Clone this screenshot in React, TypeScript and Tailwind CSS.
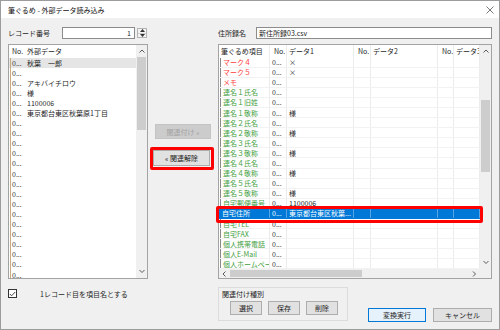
import clsx from "clsx";

const leftRows = [
  "秋葉　一郎",
  "",
  "アキバイチロウ",
  "様",
  "1100006",
  "東京都台東区秋葉原1丁目",
  ...Array(16).fill(""),
];

type Row = { name: string; red?: boolean; d1?: string; selected?: boolean };

const rightRows: Row[] = [
  { name: "マーク４", red: true, d1: "×" },
  { name: "マーク５", red: true, d1: "×" },
  { name: "メモ", red: true },
  { name: "連名１氏名" },
  { name: "連名１旧姓" },
  { name: "連名１敬称", d1: "様" },
  { name: "連名２氏名" },
  { name: "連名２敬称", d1: "様" },
  { name: "連名３氏名" },
  { name: "連名３敬称", d1: "様" },
  { name: "連名４氏名" },
  { name: "連名４敬称", d1: "様" },
  { name: "連名５氏名" },
  { name: "連名５敬称", d1: "様" },
  { name: "自宅郵便番号", d1: "1100006" },
  { name: "自宅住所", d1: "東京都台東区秋葉...", selected: true },
  { name: "自宅TEL" },
  { name: "自宅FAX" },
  { name: "個人携帯電話" },
  { name: "個人E-Mail" },
  { name: "個人ホームページ" },
];

function Chevron({ dir }: { dir: "up" | "down" | "left" | "right" }) {
  const vertical = dir === "up" || dir === "down";
  const pts = {
    up: "0.5,3.5 3,1 5.5,3.5",
    down: "0.5,1 3,3.5 5.5,1",
    left: "3.5,0.5 1,3 3.5,5.5",
    right: "1,0.5 3.5,3 1,5.5",
  }[dir];
  return (
    <svg width={vertical ? 6 : 5} height={vertical ? 5 : 6} viewBox={vertical ? "0 0 6 5" : "0 0 5 6"}>
      <polyline points={pts} fill="none" stroke="#5a5a5a" strokeWidth="1" />
    </svg>
  );
}

function VScroll({ thumb }: { thumb: string }) {
  return (
    <div className="flex h-full w-[11px] shrink-0 flex-col bg-[#f0f0f0]">
      <div className="flex h-[12px] shrink-0 items-center justify-center">
        <Chevron dir="up" />
      </div>
      <div className="flex flex-1 flex-col px-[1px]">
        <div className={clsx("w-full bg-[#cdcdcd]", thumb)} />
      </div>
      <div className="flex h-[14px] shrink-0 items-center justify-center">
        <Chevron dir="down" />
      </div>
    </div>
  );
}

function WinButton({ children, className, disabled }: { children: React.ReactNode; className?: string; disabled?: boolean }) {
  return (
    <div
      className={clsx(
        "flex items-center justify-center border",
        disabled ? "border-[#c4c4c4] bg-[#cccccc] text-[#a3a3a3]" : "border-[#adadad] bg-[#e1e1e1] text-[#1e1e1e]",
        className
      )}
    >
      {children}
    </div>
  );
}

// widths of the right grid's columns, label column first
const cols = ["w-[51px]", "w-[17px]", "w-[67px]", "w-[17px]", "w-[67px]", "w-[16px]", "w-[26px]"];

export default function App() {
  return (
    <div className="flex h-[330px] w-[500px] flex-col overflow-hidden border border-[#9c9c9c] bg-[#f0f0f0] font-['Noto_Sans_CJK_JP','Noto_Sans',sans-serif] text-[7px] leading-[10px] text-[#1e1e1e]">
      {/* Title bar */}
      <div className="flex h-[17px] shrink-0 items-center bg-white pl-[7px] pr-[5px] text-[#111]">
        <span>筆ぐるめ - 外部データ読み込み</span>
        <svg className="ml-auto" width="8" height="8" viewBox="0 0 8 8">
          <path d="M0.5 0.5 L7.5 7.5 M7.5 0.5 L0.5 7.5" stroke="#555" strokeWidth="0.8" />
        </svg>
      </div>

      {/* Record number / address book name */}
      <div className="mt-[9px] flex h-[12px] shrink-0 items-center px-[7px]">
        <span className="w-[54px]">レコード番号</span>
        <div className="flex h-[12px] w-[73px] items-center justify-end border border-[#8c8c8c] bg-white pr-[3px]">1</div>
        <div className="ml-[2px] flex h-[10px] w-[10px] flex-col border border-[#b4b4b4] bg-[#f4f4f4]">
          <div className="flex flex-1 items-center justify-center border-b border-[#cfcfcf]">
            <svg width="5" height="3" viewBox="0 0 5 3"><polygon points="0,3 2.5,0 5,3" fill="#333" /></svg>
          </div>
          <div className="flex flex-1 items-center justify-center">
            <svg width="5" height="3" viewBox="0 0 5 3"><polygon points="0,0 2.5,3 5,0" fill="#333" /></svg>
          </div>
        </div>
        <span className="ml-[71px] w-[38px]">住所録名</span>
        <div className="flex h-[12px] flex-1 items-center border border-[#8c8c8c] bg-white pl-[2px]">新住所録03.csv</div>
      </div>

      {/* Main area */}
      <div className="mt-[5px] flex h-[235px] shrink-0 px-[7px]">
        {/* External data list */}
        <div className="flex h-full w-[140px] overflow-hidden border border-[#a3a3a3] bg-white">
          <div className="flex flex-1 flex-col overflow-hidden">
            <div className="flex h-[12.5px] shrink-0 items-center">
              <span className="w-[18px] pl-[3px]">No.</span>
              <span>外部データ</span>
            </div>
            {leftRows.map((r, i) => (
              <div key={i} className={clsx("flex h-[10.1px] shrink-0 items-center whitespace-nowrap", i === 0 && "bg-[#e5e5e5]")}>
                <span className="flex h-full w-[18px] items-center text-[#333]">
                  <span className="ml-[1px] mr-[1px] h-full w-px bg-[#c9ab84]" />
                  0...
                </span>
                <span>{r}</span>
              </div>
            ))}
          </div>
          <VScroll thumb="h-[73px]" />
        </div>

        {/* Link / unlink buttons */}
        <div className="flex w-[70px] flex-col">
          <WinButton disabled className="ml-[7px] mt-[80px] h-[15px] w-[56px]">
            関連付け »
          </WinButton>
          <div className="relative ml-[5px] mt-[11px] h-[16px] w-[57px]">
            <WinButton className="h-full w-full">« 関連解除</WinButton>
            <div className="absolute -bottom-[4px] -left-[3px] -right-[4px] -top-[3px] rounded-[2px] border-[3px] border-[#ff0000]" />
          </div>
        </div>

        {/* Fudegurume fields grid */}
        <div className="relative h-full w-[274px]">
          <div className="flex h-full w-full flex-col border border-[#a3a3a3] bg-white">
            <div className="flex min-h-0 flex-1 overflow-hidden">
              <div className="flex w-[261px] flex-col">
                <div className="flex h-[12.5px] shrink-0 whitespace-nowrap">
                  {["筆ぐるめ項目", "No.", "データ1", "No.", "データ2", "No.", "データ3"].map((h, i) => (
                    <div
                      key={i}
                      className={clsx(
                        "flex items-center overflow-hidden border-r border-[#ececec]",
                        cols[i],
                        h === "No." ? "pl-[4px]" : "pl-[2px]"
                      )}
                    >
                      {h}
                    </div>
                  ))}
                </div>
                {rightRows.map((r, i) => (
                  <div
                    key={i}
                    className={clsx(
                      "flex h-[10.1px] shrink-0 whitespace-nowrap border-b",
                      r.selected ? "border-[#0078d7] bg-[#0078d7] text-white" : "border-[#f2f2f2]"
                    )}
                  >
                    <div
                      className={clsx(
                        "flex items-center overflow-hidden border-r",
                        cols[0],
                        r.selected ? "border-[#5aa3e3]" : "border-[#ececec]",
                        !r.selected && (r.red ? "text-[#ff3c3c]" : "text-[#3f9e3f]")
                      )}
                    >
                      {!r.selected && <span className="ml-[1px] mr-[2px] h-full w-px shrink-0 bg-[#8a8a8a]" />}
                      {r.selected && <span className="w-[3px] shrink-0" />}
                      {r.name}
                    </div>
                    <div className={clsx("flex items-center overflow-hidden border-r pl-[2px]", cols[1], r.selected ? "border-[#5aa3e3]" : "border-[#ececec] text-[#333]")}>
                      0...
                    </div>
                    <div className={clsx("flex items-center overflow-hidden border-r pl-[2px]", cols[2], r.selected ? "border-[#5aa3e3]" : "border-[#ececec]")}>
                      {r.d1}
                    </div>
                    {cols.slice(3).map((c, j) => (
                      <div key={j} className={clsx("border-r", c, r.selected ? "border-[#5aa3e3]" : "border-[#ececec]")} />
                    ))}
                  </div>
                ))}
              </div>
              <VScroll thumb="mt-[43px] h-[72px]" />
            </div>
            {/* Horizontal scrollbar */}
            <div className="flex h-[9px] shrink-0 bg-[#f0f0f0]">
              <div className="flex w-[11px] items-center justify-center">
                <Chevron dir="left" />
              </div>
              <div className="my-[1px] w-[132px] bg-[#cdcdcd]" />
              <div className="flex-1" />
              <div className="flex w-[11px] items-center justify-center">
                <Chevron dir="right" />
              </div>
              <div className="w-[11px]" />
            </div>
          </div>
          <div className="absolute left-[-2px] top-[162px] h-[17px] w-[267px] rounded-[2px] border-[3px] border-[#ff0000]" />
        </div>
      </div>

      {/* Bottom controls */}
      <div className="flex flex-1 px-[7px]">
        <div className="flex w-[210px] items-start">
          <div className="mt-[10px] flex h-[9px] w-[9px] items-center justify-center border border-[#333] bg-white">
            <svg width="7" height="6" viewBox="0 0 7 6">
              <polyline points="0.8,3 2.6,4.8 6.2,1" fill="none" stroke="#333" strokeWidth="0.9" />
            </svg>
          </div>
          <span className="ml-[23px] mt-[9.5px]">1レコード目を項目名とする</span>
        </div>
        <div className="mt-[8px] flex h-[34px] w-[130px] flex-col border border-[#dcdcdc] px-[3px]">
          <span className="mt-[1px]">関連付け種別</span>
          <div className="ml-[8px] mt-[2px] flex gap-[6px]">
            <WinButton className="h-[14px] w-[32px]">選択</WinButton>
            <WinButton className="h-[14px] w-[32px]">保存</WinButton>
            <WinButton className="h-[14px] w-[32px]">削除</WinButton>
          </div>
        </div>
        <div className="ml-auto mt-[29px] flex gap-[7px]">
          <div className="flex h-[14px] w-[58px] items-center justify-center border border-[#0078d7] bg-[#e5f1fb]">変換実行</div>
          <WinButton className="h-[14px] w-[59px]">キャンセル</WinButton>
        </div>
      </div>
    </div>
  );
}
